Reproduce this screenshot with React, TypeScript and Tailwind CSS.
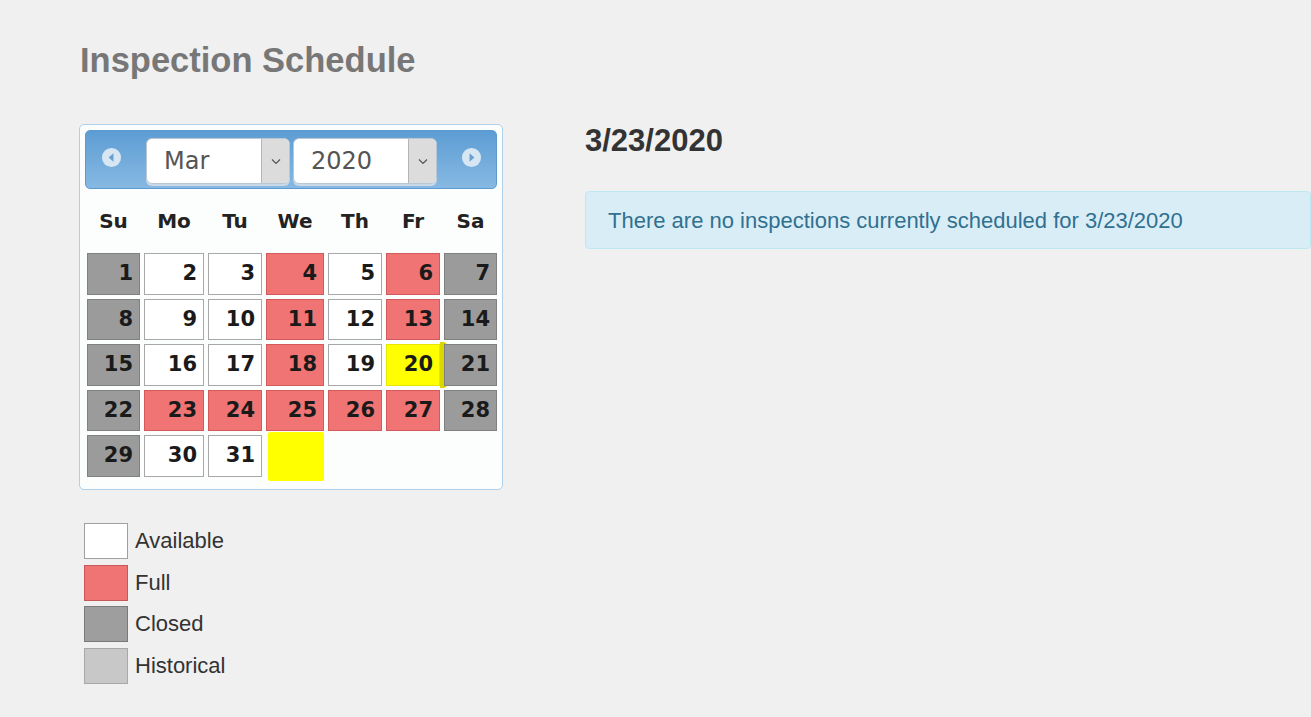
const days: { n: number; kind: 'closed' | 'open' | 'full' | 'hl' }[][] = [
  [
    { n: 1, kind: 'closed' },
    { n: 2, kind: 'open' },
    { n: 3, kind: 'open' },
    { n: 4, kind: 'full' },
    { n: 5, kind: 'open' },
    { n: 6, kind: 'full' },
    { n: 7, kind: 'closed' },
  ],
  [
    { n: 8, kind: 'closed' },
    { n: 9, kind: 'open' },
    { n: 10, kind: 'open' },
    { n: 11, kind: 'full' },
    { n: 12, kind: 'open' },
    { n: 13, kind: 'full' },
    { n: 14, kind: 'closed' },
  ],
  [
    { n: 15, kind: 'closed' },
    { n: 16, kind: 'open' },
    { n: 17, kind: 'open' },
    { n: 18, kind: 'full' },
    { n: 19, kind: 'open' },
    { n: 20, kind: 'hl' },
    { n: 21, kind: 'closed' },
  ],
  [
    { n: 22, kind: 'closed' },
    { n: 23, kind: 'full' },
    { n: 24, kind: 'full' },
    { n: 25, kind: 'full' },
    { n: 26, kind: 'full' },
    { n: 27, kind: 'full' },
    { n: 28, kind: 'closed' },
  ],
  [
    { n: 29, kind: 'closed' },
    { n: 30, kind: 'open' },
    { n: 31, kind: 'open' },
  ],
];

const kindClass = {
  closed: 'bg-[#9b9b9b] border-[#808080]',
  open: 'bg-white border-[#a8a8a8]',
  full: 'bg-[#f07474] border-[#d35a5a]',
  hl: 'bg-[#ffff00] border-[#e6e600]',
};

const legend = [
  { label: 'Available', cls: 'bg-white border-[#a0a0a0]' },
  { label: 'Full', cls: 'bg-[#f07474] border-[#c85858]' },
  { label: 'Closed', cls: 'bg-[#9e9e9e] border-[#7a7a7a]' },
  { label: 'Historical', cls: 'bg-[#c8c8c8] border-[#a8a8a8]' },
];

function NavIcon({ dir }: { dir: 'prev' | 'next' }) {
  return (
    <svg width="21" height="21" viewBox="0 0 22 22">
      <circle cx="11" cy="11" r="10" fill="#d7e6f3" />
      {dir === 'prev' ? (
        <path d="M13 6.5 L8 11 L13 15.5 Z" fill="#6a9fcf" />
      ) : (
        <path d="M9 6.5 L14 11 L9 15.5 Z" fill="#6a9fcf" />
      )}
    </svg>
  );
}

function Select({ value }: { value: string }) {
  return (
    <div className="flex h-[46px] w-[144px] overflow-hidden rounded-[6px] border border-[#b9c7d3] bg-white shadow-[0_2px_0_#c9d9e8]">
      <div className="flex flex-1 items-center pl-[17px] text-[24px] text-[#555]">{value}</div>
      <div className="flex w-[28px] items-center justify-center border-l border-[#b5b5b5] bg-[#dcdcdc]">
        <svg width="10" height="7" viewBox="0 0 10 7">
          <path d="M1 1.5 L5 5.5 L9 1.5" fill="none" stroke="#555" strokeWidth="1.2" />
        </svg>
      </div>
    </div>
  );
}

export default function App() {
  return (
    <div className="min-h-[717px] w-[1311px] overflow-hidden bg-[#f0f0f0] font-['Liberation_Sans',Arial,sans-serif]">
      <div className="pl-[80px] pt-[40px]">
        <h1 className="text-[34.5px] font-bold leading-[40px] text-[#777]">Inspection Schedule</h1>

        <div className="mt-[44px] flex">
          {/* calendar + legend */}
          <div className="w-[424px] shrink-0 -ml-[1px]">
            <div className="rounded-[5px] border border-[#aed0ea] bg-[#fcfdfd] px-[5px] pb-[8px] pt-[5px] font-['DejaVu_Sans',sans-serif]">
              <div className="flex h-[59px] items-center rounded-[5px] border border-[#5b9bd0] bg-gradient-to-b from-[#5d9dd3] to-[#86b9e3]">
                <div className="flex w-[50px] justify-center pb-[5px]">
                  <NavIcon dir="prev" />
                </div>
                <div className="flex gap-[3px] pt-[3px] pl-[10px]">
                  <Select value="Mar" />
                  <Select value="2020" />
                </div>
                <div className="flex flex-1 justify-end pr-[14px] pb-[5px]">
                  <NavIcon dir="next" />
                </div>
              </div>

              <div className="ml-[2px] grid grid-cols-[53px_60px_54px_58px_54px_54px_53px] gap-x-[4px]">
                {['Su', 'Mo', 'Tu', 'We', 'Th', 'Fr', 'Sa'].map((d) => (
                  <div key={d} className="flex h-[64px] items-center justify-center text-[20px] font-bold text-[#222]">
                    {d}
                  </div>
                ))}
              </div>

              <div className="ml-[2px] grid grid-cols-[53px_60px_54px_58px_54px_54px_53px] gap-x-[4px] gap-y-[4px]">
                {days.flat().map((d) => (
                  <div
                    key={d.n}
                    className={`relative flex h-[41.5px] items-center justify-end border pr-[6px] text-[21px] font-semibold text-[#1a1a1a] ${kindClass[d.kind]}`}
                  >
                    {d.n}
                    {d.kind === 'hl' && (
                      <span className="absolute -right-[8px] top-[-3px] h-[46px] w-[7px] rounded-r-[4px] bg-[#d8d800]" />
                    )}
                  </div>
                ))}
                <div className="ml-[2px] -mt-[3px] h-[49px] w-[56px] rounded-[2px] bg-[#ffff00]" />
              </div>
            </div>

            <div className="mt-[33px] ml-[5px] flex flex-col gap-[5.5px]">
              {legend.map((l) => (
                <div key={l.label} className="flex items-center gap-[7px]">
                  <div className={`h-[36px] w-[44px] border ${l.cls}`} />
                  <span className="text-[22px] leading-none text-[#333]">{l.label}</span>
                </div>
              ))}
            </div>
          </div>

          {/* right side */}
          <div className="ml-[82px] flex-1">
            <h2 className="text-[31px] font-bold leading-[34px] text-[#333]">3/23/2020</h2>
            <div className="mt-[33px] flex h-[58px] items-center rounded-[4px] border border-[#bce8f1] bg-[#d9edf7] pl-[22px] text-[22px] text-[#31708f]">
              There are no inspections currently scheduled for 3/23/2020
            </div>
          </div>
        </div>
      </div>
    </div>
  );
}
